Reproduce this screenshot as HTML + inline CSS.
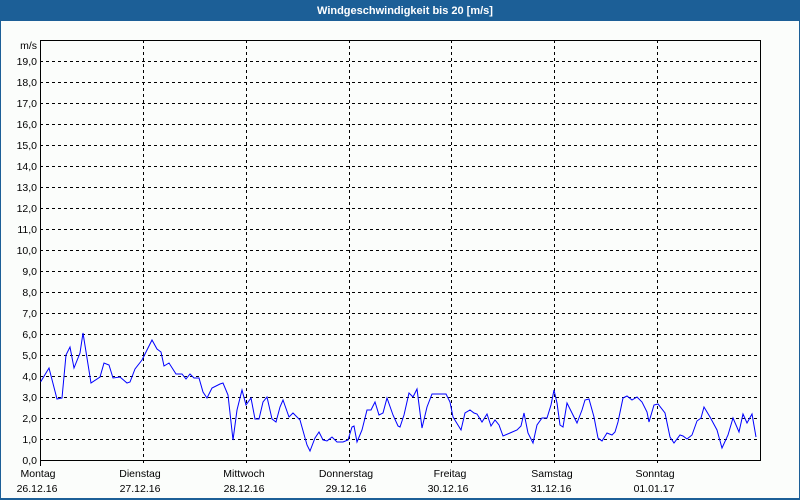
<!DOCTYPE html>
<html><head><meta charset="utf-8"><style>
html,body{margin:0;padding:0;width:800px;height:500px;overflow:hidden;background:#fbfdfb}
svg{display:block}
text{font-family:"Liberation Sans","DejaVu Sans",sans-serif;font-size:10.5px;fill:#000}
</style></head><body>
<svg width="800" height="500" viewBox="0 0 800 500" xmlns="http://www.w3.org/2000/svg">
<rect x="0" y="0" width="800" height="500" fill="#1c5f97"/>
<rect x="1" y="21" width="798" height="477" fill="#fbfdfb"/>
<text x="405" y="14" text-anchor="middle" style="font-weight:bold;fill:#fff;font-size:11px">Windgeschwindigkeit bis 20 [m/s]</text>
<g stroke="#000" stroke-width="1" stroke-dasharray="3,3" shape-rendering="crispEdges">
<path d="M40 61.5H760M40 82.5H760M40 103.5H760M40 124.5H760M40 145.5H760M40 166.5H760M40 187.5H760M40 208.5H760M40 229.5H760M40 250.5H760M40 271.5H760M40 292.5H760M40 313.5H760M40 334.5H760M40 355.5H760M40 376.5H760M40 397.5H760M40 418.5H760M40 439.5H760"/>
<path d="M143.5 40V466M246.5 40V466M349.5 40V466M451.5 40V466M554.5 40V466M657.5 40V466"/>
</g>
<g stroke="#000" stroke-width="1" shape-rendering="crispEdges" fill="none">
<rect x="40.5" y="40.5" width="720" height="420"/>
<path d="M40.5 460V466"/>
</g>
<g text-anchor="end">
<text x="37" y="49">m/s</text>
<text x="37" y="65">19,0</text><text x="37" y="86">18,0</text><text x="37" y="107">17,0</text><text x="37" y="128">16,0</text><text x="37" y="149">15,0</text><text x="37" y="170">14,0</text><text x="37" y="191">13,0</text><text x="37" y="212">12,0</text><text x="37" y="233">11,0</text><text x="37" y="254">10,0</text><text x="37" y="275">9,0</text><text x="37" y="296">8,0</text><text x="37" y="317">7,0</text><text x="37" y="338">6,0</text><text x="37" y="359">5,0</text><text x="37" y="380">4,0</text><text x="37" y="401">3,0</text><text x="37" y="422">2,0</text><text x="37" y="443">1,0</text><text x="37" y="464">0,0</text>
</g>
<g text-anchor="middle">
<text x="38" y="477">Montag</text><text x="37" y="492">26.12.16</text>
<text x="140" y="477">Dienstag</text><text x="140" y="492">27.12.16</text>
<text x="244" y="477">Mittwoch</text><text x="244" y="492">28.12.16</text>
<text x="346" y="477">Donnerstag</text><text x="346" y="492">29.12.16</text>
<text x="450" y="477">Freitag</text><text x="448" y="492">30.12.16</text>
<text x="552" y="477">Samstag</text><text x="551" y="492">31.12.16</text>
<text x="655" y="477">Sonntag</text><text x="654" y="492">01.01.17</text>
</g>
<polyline fill="none" stroke="#0000ff" stroke-width="1" points="40.7,381.7 49,368 57,399 62,398 66,355 70,347 74,368 80,353 83,333 91,383 100,377 104,363 109,365 113,378 120,377 127,383 130,382 135,369 142,360 152,340 157,349 161,352 164,366 169,363 176,374 182,374 186,379 190,374 194,378 199,378 203,392 207,398 212,388 220,384 223,383 228,395 233,440 237,410 242,390 246,405 251,398 255,419 259,419 263,402 267,397 272,419 276,422 280,407 283,400 289,417 293,413 300,420 307,445 310,451 315,438 319,432 323,440 327,441 332,437 337,442 343,442 348,440 352,427 354,426 357,442 362,430 367,410 371,410 375,402 379,415 383,413 387,398 393,415 398,426 400,427 404,415 409,393 413,397 417,389 422,428 427,407 432,394 446,394 450,402 453,417 461,430 465,413 470,410 474,413 477,414 482,422 487,414 491,426 495,420 499,425 503,436 510,433 517,430 521,426 524,413 528,433 533,443 537,425 542,418 547,418 551,405 554,390 557,403 560,425 563,427 567,403 572,413 577,423 582,410 585,400 589,399 594,417 598,438 602,441 607,433 612,435 615,432 618,422 623,398 627,396 632,400 637,397 642,402 647,412 649,422 654,405 658,404 665,413 670,437 674,443 680,435 683,436 687,439 692,435 697,421 701,418 704,407 710,417 717,430 722,448 728,435 733,418 739,432 743,414 747,423 752,414 756,437"/>
</svg>
</body></html>
